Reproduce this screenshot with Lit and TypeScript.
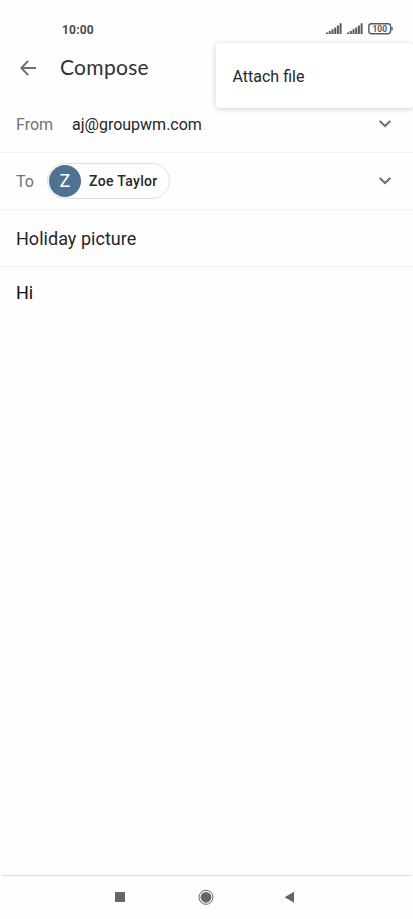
import { LitElement, html, svg, css } from "lit";
import { customElement } from "lit/decorators.js";

const bars = (x: number) => svg`
  <path fill="#5a5a5a" d="M${x} 12v-1.6h2.1v1.6z M${x + 2.8} 12v-3h2v3z M${x + 5.5} 12v-4.8h2v4.8z M${x + 8.2} 12v-6.6h2v6.6z M${x + 10.9} 12v-8.4h2v8.4z M${x + 13.6} 12v-10.8h2v10.8z"/>`;

const chevron = html`<svg class="chevron" width="12" height="8" viewBox="0 0 12 8">
  <path d="M.7 .9 6 6.1 11.3 .9" fill="none" stroke="#707070" stroke-width="2.1"/>
</svg>`;

@customElement("app-root")
export class AppRoot extends LitElement {
  static styles = css`
    :host {
      display: flex;
      flex-direction: column;
      box-sizing: border-box;
      position: relative;
      width: 100%;
      height: 100vh;
      overflow: hidden;
      background: #fefefe;
      color: #252629;
      font-family: Roboto, sans-serif;
      font-size: 16px;
      line-height: 20px;
    }
    svg { display: block; flex: none; }
    .status {
      display: flex;
      justify-content: space-between;
      box-sizing: border-box;
      height: 43px;
      padding: 20px 19px 0 62px;
    }
    .time { font-size: 12px; font-weight: 700; letter-spacing: 0.2px; color: #4c4c4c; }
    .signals { margin-top: 2px; }
    .batt { font: 700 8.5px Roboto, sans-serif; fill: #5a5a5a; }
    .bar {
      display: flex;
      align-items: center;
      box-sizing: border-box;
      height: 50px;
      padding: 0 0 1px 20px;
      gap: 23px;
    }
    .title {
      font-family: Lato, sans-serif;
      font-size: 21px;
      line-height: 28px;
      color: #303134;
      letter-spacing: 0.3px;
      padding-bottom: 2px;
    }
    .row {
      display: flex;
      align-items: center;
      box-sizing: border-box;
      border-bottom: 1px solid #f3f3f3;
      padding: 0 22px 0 16px;
    }
    .from { height: 60px; padding-top: 4px; }
    .to { height: 57px; }
    .subject { height: 57px; font-size: 18px; padding-top: 1px; letter-spacing: 0.03px; }
    .label { color: #707276; }
    .from .label { width: 56px; }
    .to .label { width: 31px; padding-top: 2px; }
    .chevron { margin-left: auto; }
    .from .chevron { margin-bottom: 1px; }
    .chip {
      display: flex;
      align-items: center;
      box-sizing: border-box;
      height: 36px;
      width: 123px;
      border: 1px solid #dcdee0;
      border-radius: 18px;
      padding-left: 1px;
      gap: 8px;
      font-size: 14px;
      font-weight: 500;
      letter-spacing: 0.33px;
      white-space: nowrap;
    }
    .avatar {
      display: grid;
      place-items: center;
      width: 32px;
      height: 32px;
      border-radius: 50%;
      background: #507191;
      color: #fff;
      font-size: 18px;
      font-weight: 400;
      letter-spacing: 0;
    }
    .body { flex: 1; padding: 16px; font-size: 18px; color: #111; }
    .nav {
      box-sizing: border-box;
      height: 44px;
      margin: 0 2px;
      border-top: 1px solid #dcdcdc;
    }
    .menu {
      position: absolute;
      top: 43px;
      left: 216px;
      right: 0;
      height: 65px;
      box-sizing: border-box;
      padding: 24px 16.5px;
      border-radius: 4px;
      background: #fff;
      box-shadow: 0 1px 6px rgba(0, 0, 0, 0.18);
    }
  `;

  render() {
    return html`
      <div class="status">
        <span class="time">10:00</span>
        <svg class="signals" width="68" height="14" viewBox="0 0 68 14">
          ${bars(0)}${bars(21)}
          <rect x="42.8" y="1.7" width="21.8" height="10" rx="2.6" fill="none" stroke="#5a5a5a" stroke-width="1.4"/>
          <path d="M66 5.1v3.2" stroke="#5a5a5a" stroke-width="1.4"/>
          <text class="batt" x="53.7" y="9.8" text-anchor="middle">100</text>
        </svg>
      </div>
      <div class="bar">
        <svg width="17" height="16" viewBox="0 0 17 16">
          <path d="M16 8H1.5M8.2 .9 1.3 8l6.9 7.1" fill="none" stroke="#6c6d70" stroke-width="2"/>
        </svg>
        <span class="title">Compose</span>
      </div>
      <div class="row from"><span class="label">From</span><span>aj@groupwm.com</span>${chevron}</div>
      <div class="row to">
        <span class="label">To</span>
        <span class="chip"><span class="avatar">Z</span>Zoe Taylor</span>
        ${chevron}
      </div>
      <div class="row subject">Holiday picture</div>
      <div class="body">Hi</div>
      <div class="nav">
        <svg width="409" height="43" viewBox="2 876 409 43" fill="#666">
          <rect x="115" y="892" width="10" height="10"/>
          <circle cx="206" cy="897.3" r="5.4"/>
          <circle cx="206" cy="897.3" r="7" fill="none" stroke="#666" stroke-width="1"/>
          <path d="M284.6 897.2 294 891.8v11z"/>
        </svg>
      </div>
      <div class="menu">Attach file</div>
    `;
  }
}
